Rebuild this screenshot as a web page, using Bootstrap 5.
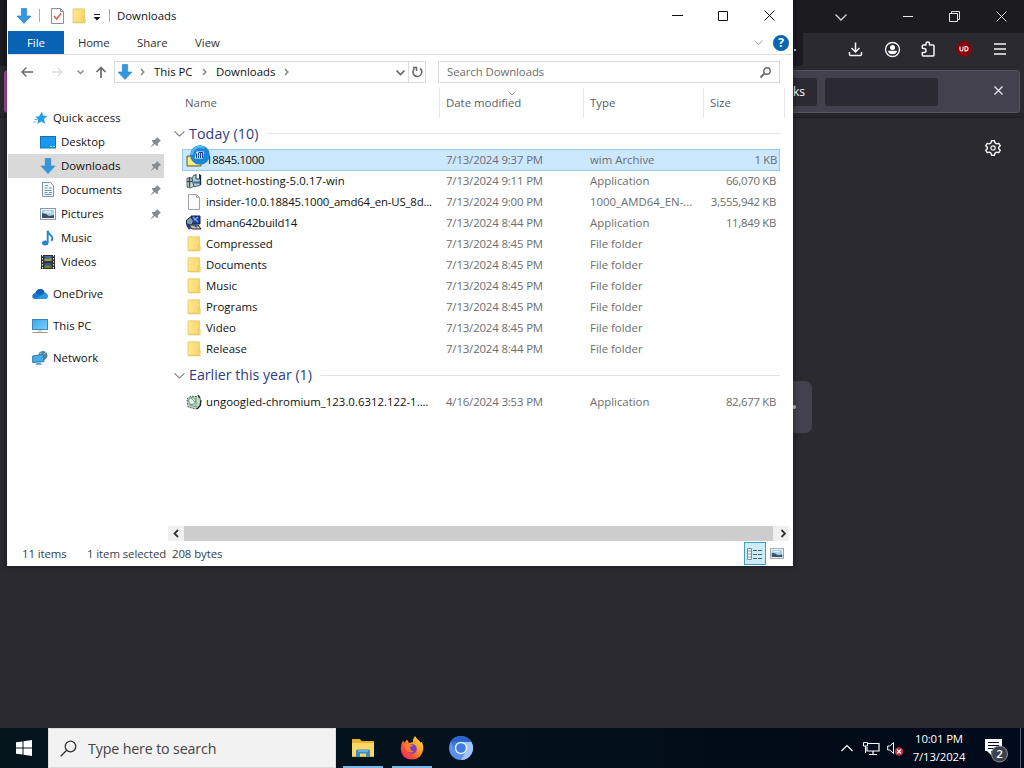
<!DOCTYPE html>
<html lang="en">
<head>
<meta charset="utf-8">
<title>Downloads</title>
<link href="https://cdn.jsdelivr.net/npm/bootstrap@5.3.0/dist/css/bootstrap.min.css" rel="stylesheet">
<script src="https://cdn.jsdelivr.net/npm/bootstrap@5.3.0/dist/js/bootstrap.bundle.min.js"></script>
<style>
body{width:1024px;height:768px;font-family:"Open Sans","Noto Sans",sans-serif;font-size:11.4px;line-height:16px;color:#111;background:#2b2a30}
svg{display:block;flex:none;overflow:visible}
.desk{width:1024px;height:768px}
.ff{height:728px;color:#fbfbfe}
.ff-title{height:33px;background:#1c1b20;padding-right:17px}
.ff-tools{height:36px;background:#2b2a31;padding-right:17px}
.ff-url{width:803px;height:33px;background:#1c1b22;border-radius:0 0 4px 0;padding-right:7px}
.ff-note{height:43px;margin:1px 4px 0 4px;background:#42414d;border:1px solid #55545f;border-radius:4px;padding-right:16px;border-left:4px solid #a14c9b}
.ff-chip{height:28px;background:#2b2a33;border-radius:3px}
.ff-line{height:5px;background:#25242c;border-bottom:1px solid #1e1d25}
.ff-box{width:120px;height:52px;margin-left:692px;margin-top:232px;background:#42414d;border-radius:7px;padding-right:16px}
.win{left:7px;top:0;width:786px;height:566px;background:#fff;padding-left:1px;box-shadow:0 0 7px rgba(0,0,0,.45)}
.w-title{height:31px;padding-left:8px}
.vr-line{width:1px;height:13px;background:#aaa}
.w-tabs{height:24px;border-bottom:1px solid #dfe0e2;color:#333}
.file-tab{width:56px;height:23px;background:#0863b5;color:#fff}
.w-addr{height:33px;padding:1px 13px 0 12px}
.box-in{height:22px;border:1px solid #d9d9d9}
.w-body{height:453px}
.side{width:156px;padding-top:18px}
.side-i{height:24px;padding-left:32px;padding-right:2px}
.side-r{height:24px;padding-left:24px;margin-top:8px}
.side-q{height:24px;padding-left:25px}
.side-on{background:#d9d9d9}
.side-i svg,.side-r svg,.side-q svg{margin-right:5px}
.side-i svg.pin{margin:0}
.pane{margin-left:4px;width:621px}
.heads{height:30px;padding-left:17px;color:#56606e}
.heads>div{flex:none;padding-left:6px;border-left:1px solid #e7e7e7;height:30px;padding-top:7px}
.heads>.h0{width:254px;border:0;padding-left:0}
.grp{height:31px;padding-left:6px;padding-right:9px;font-size:14.2px;color:#2c3b86}
.grp2{height:32px}
.grp i{height:1px;background:#e4e4e8;margin-left:8px}
.it{height:21px;margin-left:14px;width:598px;padding-left:4px;color:#6d6d6d;white-space:nowrap}
.it.on{height:22px;margin-bottom:-1px;background:#cce8ff;border:1px solid #99c9ee;padding-left:3px}
.it.on .c3{padding-right:3px}
.it svg{margin-right:4px}
.it span{flex:none}
.c0{width:240px;color:#111}
.c0.long{letter-spacing:-.17px}
.c0.num{letter-spacing:-.35px}
.c1{width:144px;letter-spacing:-.15px}.c2{width:104px}.c3{width:86px;padding-right:4px;text-align:right;letter-spacing:-.3px}
.hs{height:15px;background:#f0f0f0;padding:0 0 0 4px}
.thumb{width:589px;height:15px;background:#cdcdcd}
.stat{height:25px;padding:0 5px 0 14px;color:#333d4c;letter-spacing:-.08px}
.view-on{width:22px;height:23px;background:#cdecfa;border:1px solid #3f9cc4}
.bar{height:40px;background:linear-gradient(90deg,#04151c,#03121c 45%,#020a17 80%,#010a1b)}
.start{width:48px}
.srch{width:288px;height:40px;background:#f2f2f2;border:1px solid #dadcde;color:#444;font-size:14.25px;letter-spacing:-.15px;padding-left:11px;padding-top:1px}
.app{width:49px;height:40px}
.app b{width:40px;height:2px;background:#76b9ed}
.clock{width:64px;font-size:11.4px;line-height:18px;color:#fff;letter-spacing:-.15px}
</style>
</head>
<body>
<svg width="0" height="0" class="position-absolute">
<defs>
<linearGradient id="fg" x1="0" x2="1"><stop offset="0" stop-color="#ffe68f"/><stop offset="1" stop-color="#f5d86c"/></linearGradient>
<linearGradient id="scr" x1="0" x2="1" y2="1"><stop offset="0" stop-color="#3aa5e8"/><stop offset="1" stop-color="#7ed0fa"/></linearGradient>
<symbol id="dl" viewBox="0 0 16 16"><path d="M5.300.5h5.400V8H15l-7 7.500L1 8h4.300z" fill="#3496dc" stroke="#2480c4" stroke-width=".6"/></symbol>
<symbol id="fold" viewBox="0 0 14 16"><path d="M1 .8h11.500V14.500H1z" fill="url(#fg)" stroke="#e3c461" stroke-width=".7"/><path d="M11.500 8.500l1.700 1.200V15H3l-2-.8h10.500z" fill="#f8dc78" stroke="#dfbd55" stroke-width=".5"/></symbol>
<symbol id="pin" viewBox="0 0 12 12"><path d="M7 1l4 4-1.300.5-1.700 1.800.1 2.200-1 .8-2.300-2.300L1 11l-.3-.3L3.600 7 1.700 5l.8-1 2.200.1L6.500 2.300z" fill="#848b91"/></symbol>
<symbol id="pc" viewBox="0 0 16 16"><rect x=".5" y="1.500" width="15" height="10" fill="url(#scr)" stroke="#3a86b8"/><path d="M6 12h4v2H6z" fill="#d3dadf"/><path d="M.5 14.500h15" stroke="#a9958c"/></symbol>
<symbol id="chev" viewBox="0 0 10 10"><path d="M.5 3L5 7.300 9.500 3" fill="none" stroke="currentColor"/></symbol>
<symbol id="pic" viewBox="0 0 16 12"><rect x=".5" y=".5" width="15" height="11" fill="#f4f8fb" stroke="#8d9aa6"/><rect x="2" y="2" width="12" height="8" fill="#a9cde3"/><path d="M2 5l4 1 3 2 5-1v3H2z" fill="#3b5266"/><path d="M4 4h7" stroke="#fff"/></symbol>
</defs></svg>

<main class="desk position-relative overflow-hidden">
<section class="ff">
  <div class="ff-title d-flex align-items-center justify-content-end">
    <svg width="14" height="14" style="margin-right:54px"><path d="M1.500 4.500L7 10 12.500 4.500" fill="none" stroke="#d6d6dc" stroke-width="1.300"/></svg>
    <svg width="12" height="12" style="margin-right:35px"><path d="M1 5.500h10" stroke="#e8e8ec"/></svg>
    <svg width="11" height="11" style="margin-right:36px"><path d="M.5 2.500h8v8h-8zM2.500 2.500v-2h8v8h-2" fill="none" stroke="#e0e0e5"/></svg>
    <svg width="11" height="11"><path d="M.5.5l10 10M10.500.5l-10 10" stroke="#cfcfd5"/></svg>
  </div>
  <div class="ff-tools d-flex justify-content-between">
    <div class="ff-url d-flex align-items-center justify-content-end"><span class="rounded-circle bg-light" style="width:2px;height:2px"></span></div>
    <div class="d-flex align-items-center" style="height:32px">
      <svg width="14" height="14" style="margin-right:22px"><path d="M7.500 .5v9M3.500 6l4 4 4-4M1.500 10v2.500q0 1 1 1h10q1 0 1-1V10" fill="none" stroke="#f4f4f8" stroke-width="1.500"/></svg>
      <svg width="16" height="16" style="margin-right:20px"><circle cx="8.500" cy="8.500" r="7" fill="none" stroke="#f4f4f8" stroke-width="1.400"/><circle cx="8.500" cy="6.500" r="2.500" fill="#fff"/><path d="M4 9.800h9Q12.500 13.300 8.500 13.300T4 9.800" fill="#fff"/></svg>
      <svg width="16" height="16" style="margin-right:20px"><path d="M2.300 7.300V5q0-1 1-1H6V3q0-2 1.800-2T9.500 3v1H13q1 0 1 1v9q0 1-1 1H3.300q-1 0-1-1v-2.500H4q2 0 2-2T4 7.400z" fill="none" stroke="#f4f4f8" stroke-width="1.500" stroke-linejoin="round"/></svg>
      <svg width="16" height="16" style="margin-right:22px"><path d="M5 .5h6L15.500 5v6L11 15.500H5L.5 11V5z" fill="#8b0009"/><path d="M4 5.500v3q0 1.500 1.500 1.500T7 8.500v-3M9 5.500h1q2 0 2 2.200T10 10H9z" fill="none" stroke="#fff" stroke-width="1.100"/></svg>
      <svg width="13" height="12"><path d="M0 1h12M0 6h12M0 11h12" stroke="#f4f4f8" stroke-width="1.400"/></svg>
    </div>
  </div>
  <div class="ff-note d-flex align-items-center justify-content-end">
    <div class="ff-chip d-flex align-items-center justify-content-end" style="width:90px;padding-right:12px;margin-right:8px;font-size:12px">Bookmarks</div>
    <div class="ff-chip" style="width:113px;margin-right:56px"></div>
    <svg width="9" height="9" style="margin-top:-3px"><path d="M.5.5l8 8M8.500.5l-8 8" stroke="#e8e8ee" stroke-width="1.300"/></svg>
  </div>
  <div class="ff-line"></div>
  <div class="d-flex justify-content-end" style="padding:22px 23px 0 0;height:31px">
    <svg width="16" height="16" viewBox="0 0 16 16"><path d="M6.500.8h3l.5 2.100 1.700 1 2.100-.6 1.500 2.500L13.700 7.300v1.400l1.600 1.500-1.500 2.500-2.100-.6-1.700 1-.5 2.100h-3L6 13.100l-1.700-1-2.100.6-1.500-2.500 1.600-1.500V7.300L.7 5.800l1.500-2.500 2.100.6 1.700-1z" fill="none" stroke="#f4f4f8" stroke-width="1.400" stroke-linejoin="round"/><circle cx="8" cy="8" r="2.200" fill="none" stroke="#f4f4f8" stroke-width="1.200"/></svg>
  </div>
  <div class="ff-box d-flex align-items-center justify-content-end"><span class="rounded-circle" style="width:4px;height:4px;background:#bbb"></span></div>
</section>

<section class="win position-absolute d-flex flex-column">
  <div class="w-title d-flex align-items-center">
    <svg width="16" height="16"><use href="#dl"/></svg>
    <span class="vr-line" style="margin:0 11px 0 7px"></span>
    <svg width="13" height="16"><path d="M.5.5h9l3 3v12H.5z" fill="#fff" stroke="#888da0"/><path d="M9.500.5v3h3" fill="none" stroke="#888da0"/><path d="M3 8l2.500 3L10 5.500" fill="none" stroke="#dc6548" stroke-width="1.700"/></svg>
    <svg width="14" height="16" style="margin-left:8px"><use href="#fold"/></svg>
    <svg width="8" height="7" style="margin:3px 8px 0 7px"><path d="M1 .5h6" stroke="#222"/><path d="M.5 3h7L4 6.500z" fill="#111"/></svg>
    <span class="vr-line" style="margin-right:7px"></span>
    <span>Downloads</span>
    <div class="d-flex align-items-center ms-auto" style="padding-right:18px">
      <svg width="11" height="11" style="margin-right:35px"><path d="M0 5.500h11" stroke="#111"/></svg>
      <svg width="10" height="10" style="margin-right:36px"><path d="M.5.5h9v9h-9z" fill="none" stroke="#111"/></svg>
      <svg width="11" height="11"><path d="M.5.5l10 10M10.500.5l-10 10" stroke="#111"/></svg>
    </div>
  </div>
  <div class="w-tabs d-flex align-items-center">
    <div class="file-tab d-flex align-items-center justify-content-center">File</div>
    <span style="margin-left:14px;width:59px;letter-spacing:-.2px">Home</span><span style="width:58px">Share</span><span>View</span>
    <div class="d-flex align-items-center ms-auto" style="padding-right:4px;color:#999">
      <svg width="9" height="9" style="margin-right:10px"><use href="#chev"/></svg>
      <svg width="16" height="16"><circle cx="8" cy="8" r="7.700" fill="#0966b4" stroke="#074b86" stroke-width=".6"/><text x="8" y="12.400" text-anchor="middle" font-size="12" font-weight="700" fill="#fff">?</text></svg>
    </div>
  </div>
  <div class="w-addr d-flex align-items-center">
    <svg width="14" height="12" style="margin-right:17px"><path d="M13 6H2M6.500 1.500L2 6l4.500 4.500" fill="none" stroke="#666" stroke-width="1.400"/></svg>
    <svg width="13" height="12" style="margin-right:13px"><path d="M1 6h10M6.500 1.500L11 6l-4.500 4.500" fill="none" stroke="#ddd" stroke-width="1.300"/></svg>
    <svg width="7" height="7" style="margin-right:11px"><path d="M.5 1.500l3 3 3-3" fill="none" stroke="#888" stroke-width="1.400"/></svg>
    <svg width="12" height="12" style="margin-right:7px"><path d="M6 12V1.500M1.500 6L6 1.500 10.500 6" fill="none" stroke="#6b6b6b" stroke-width="1.700"/></svg>
    <div class="box-in d-flex align-items-center" style="width:312px;padding-left:2px">
      <svg width="16" height="16"><use href="#dl"/></svg>
      <svg width="5" height="8" style="margin:0 9px 0 7px"><path d="M1 1l3 3-3 3" fill="none" stroke="#777" stroke-width="1.200"/></svg>
      <span style="width:41px">This PC</span>
      <svg width="5" height="8" style="margin:0 9px 0 7px"><path d="M1 1l3 3-3 3" fill="none" stroke="#777" stroke-width="1.200"/></svg>
      <span style="width:60px">Downloads</span>
      <svg width="5" height="8" style="margin-left:8px"><path d="M1 1l3 3-3 3" fill="none" stroke="#777" stroke-width="1.200"/></svg>
      <svg width="9" height="9" class="ms-auto" style="margin-right:3px"><path d="M.5 2.500l4 4 4-4" fill="none" stroke="#666" stroke-width="1.700"/></svg>
      <div class="d-flex align-items-center justify-content-center h-100" style="width:17px;border-left:1px solid #ddd"><svg width="12" height="12"><path d="M3.500 2.500A4.500 4.500 0 1 0 9 2.300M2 1.500H5.500V5" fill="none" stroke="#666" stroke-width="1.500"/></svg></div>
    </div>
    <div class="box-in d-flex align-items-center justify-content-between" style="width:342px;margin-left:12px;padding:0 8px;color:#6d6d6d;letter-spacing:-.08px">Search Downloads
      <svg width="11" height="11"><circle cx="7" cy="4" r="3.200" fill="none" stroke="#666" stroke-width="1.400"/><path d="M4.600 6.400L.5 10.500" stroke="#666" stroke-width="1.900"/></svg>
    </div>
  </div>

  <div class="w-body d-flex">
    <nav class="side">
      <div class="side-q d-flex align-items-center"><svg width="15" height="14" viewBox="0 0 15 14"><path d="M9 .5l1 4 4.500.4-3.500 3 1.200 4.800-4-2.300-3.800 2.500.8-4.200-2.700-3L6 5.300z" fill="#279de8"/><path d="M1.500 8.500h3M.5 11h3" stroke="#5db6ec"/></svg>Quick access</div>
      <div class="side-i d-flex align-items-center"><svg width="16" height="13"><rect x=".5" y=".5" width="15" height="11.500" fill="#1b98ee" stroke="#1673b8"/><path d="M10 10.500h5" stroke="#a6d8f8" stroke-dasharray="2 1"/></svg>Desktop<svg class="pin ms-auto" width="12" height="12"><use href="#pin"/></svg></div>
      <div class="side-i side-on d-flex align-items-center"><svg width="16" height="16"><use href="#dl"/></svg>Downloads<svg class="pin ms-auto" width="12" height="12"><use href="#pin"/></svg></div>
      <div class="side-i d-flex align-items-center"><svg width="16" height="16"><path d="M2.500.5h8l3 3v11h-11z" fill="#f5f9fc" stroke="#8293a2"/><path d="M5 3.500h3M4.500 6h3m1.500 0h3M4.500 8.500h7M4.500 10.500h3m1.500 0h3M4.500 12.500h7" stroke="#5b97c2"/></svg>Documents<svg class="pin ms-auto" width="12" height="12"><use href="#pin"/></svg></div>
      <div class="side-i d-flex align-items-center"><svg width="16" height="12"><use href="#pic"/></svg>Pictures<svg class="pin ms-auto" width="12" height="12"><use href="#pin"/></svg></div>
      <div class="side-i d-flex align-items-center"><svg width="16" height="16"><ellipse cx="5.200" cy="13" rx="3.200" ry="2.500" fill="#2488cb"/><path d="M7.700 13V.7q.5 2.500 2.800 4.200 3 2.800 1 6" fill="none" stroke="#2488cb" stroke-width="1.900"/></svg>Music</div>
      <div class="side-i d-flex align-items-center"><svg width="16" height="16"><rect x="1" y="1" width="14" height="14" fill="#333"/><path d="M2.500 1v14M13.500 1v14" stroke="#ddd" stroke-dasharray="1.500 1.500"/><path d="M4.500 2h7v5h-7z" fill="#496b9c"/><path d="M4.500 5l4 0 3-1v3h-7z" fill="#9aa241"/><path d="M4.500 9h7v5h-7z" fill="#35538a"/><path d="M4.500 12l3-1 4 1v2h-7z" fill="#717d3a"/></svg>Videos</div>
      <div class="side-r d-flex align-items-center"><svg width="16" height="12"><path d="M4 11Q.3 11 .3 8.200T3.500 5Q5 .8 8.500 1q3 .2 4 3.500Q15.700 5 15.700 8T13 11z" fill="#1579ce"/><path d="M4 11L12.500 5q3.200.7 3.200 3.200T13 11z" fill="#2a98e2"/><path d="M3.500 5Q5 .8 8.500 1q3 .2 4 3.500L9 7z" fill="#0c62b4"/></svg>OneDrive</div>
      <div class="side-r d-flex align-items-center"><svg width="16" height="16"><use href="#pc"/></svg>This PC</div>
      <div class="side-r d-flex align-items-center"><svg width="16" height="16"><circle cx="11" cy="5.500" r="4.500" fill="#5b8398"/><path d="M8 3l3 2 3-3M11 5v5" stroke="#a9ccd8" fill="none"/><path d="M.7 6l10.500-1.500.8 7-11.300 1z" fill="#45aee8" stroke="#2878ac"/><path d="M5 13l4-.5v1.500l2 .8H3z" fill="#5a9fc4"/></svg>Network</div>
    </nav>

    <div class="pane d-flex flex-column">
      <div class="heads d-flex">
        <div class="h0">Name</div>
        <div class="position-relative" style="width:144px">Date modified<svg width="8" height="5" class="position-absolute" style="left:68px;top:3px"><path d="M.5.5L4 4 7.500.5" fill="none" stroke="#999"/></svg></div>
        <div style="width:120px">Type</div>
        <div style="width:81px">Size</div><div></div>
      </div>
      <div class="grp d-flex align-items-center"><svg width="11" height="11" style="margin-right:4px;color:#777"><use href="#chev"/></svg><span style="letter-spacing:.12px">Today (10)</span><i class="flex-fill"></i></div>

      <div class="it on d-flex align-items-center position-relative"><svg width="16" height="16"><path d="M1 4h6l1 2h7v8H1z" fill="#f7e46b" stroke="#555b35"/><path d="M3 6v5h8" stroke="#fff6ac" fill="none"/></svg><span class="c0 num">18845.1000</span><span class="c1">7/13/2024 9:37 PM</span><span class="c2">wim Archive</span><span class="c3">1 KB</span>
        <svg class="position-absolute m-0" width="20" height="20" style="left:7px;top:-5px"><circle cx="10" cy="10" r="9.800" fill="#1b85d8"/><path d="M2 10A8 8 0 0 1 14 3" fill="none" stroke="#52b4f3" stroke-width="2.500"/><path d="M4.500 13.500l2-7h7.500l-1 7z" fill="#eef7ff"/><path d="M6.500 13V8.500M8.500 7.500h4.500M8.500 13V8M10.500 13V8M12.500 13V7" stroke="#153fa3" stroke-width="1.100"/></svg>
      </div>
      <div class="it d-flex align-items-center"><svg width="16" height="16"><path d="M1 5h5l2 8-3 2-4-1z" fill="#cfd6d2" stroke="#38484b" stroke-width=".8"/><path d="M6 5l2-3h6.500V12L8 14z" fill="#b4cbd8" stroke="#263b4d" stroke-width=".8"/><path d="M10 1v5h3.500V1" fill="#f5fafc" stroke="#23435f"/><path d="M3.500 4v10M1 8.500h5" fill="none" stroke="#3a4d55" stroke-width="1.400"/><path d="M8 9.500h6" stroke="#2f6fa2" stroke-width="2"/><path d="M14.500 2v10" stroke="#17283a" stroke-width="1.400"/></svg><span class="c0" style="letter-spacing:.1px">dotnet-hosting-5.0.17-win</span><span class="c1">7/13/2024 9:11 PM</span><span class="c2">Application</span><span class="c3">66,070 KB</span></div>
      <div class="it d-flex align-items-center"><svg width="16" height="16"><path d="M2.500.5h8l3 3v12h-11z" fill="#fdfdfd" stroke="#a3a3a3"/><path d="M10.500.5v3h3" fill="none" stroke="#a3a3a3"/></svg><span class="c0 long">insider-10.0.18845.1000_amd64_en-US_8d...</span><span class="c1">7/13/2024 9:00 PM</span><span class="c2">1000_AMD64_EN-...</span><span class="c3">3,555,942 KB</span></div>
      <div class="it d-flex align-items-center"><svg width="16" height="16"><path d="M5 1h9v8H5z" fill="#1b43ad" stroke="#222"/><path d="M7 2l5 5M7 6l5-4" stroke="#75aaf0" stroke-width="1.300"/><path d="M.5 5l4-3 3 4-2 5-5-2z" fill="#7f9fa8" stroke="#222f51"/><path d="M3 10h9l3 4H6z" fill="#c7bea8" stroke="#222"/><path d="M1 9l3 5" stroke="#213b87" stroke-width="2.500"/><path d="M7 9l4 3" stroke="#2b5b9a" stroke-width="2"/></svg><span class="c0" style="letter-spacing:-.12px">idman642build14</span><span class="c1">7/13/2024 8:44 PM</span><span class="c2">Application</span><span class="c3">11,849 KB</span></div>
      <div class="it d-flex align-items-center"><svg width="16" height="16"><use href="#fold"/></svg><span class="c0">Compressed</span><span class="c1">7/13/2024 8:45 PM</span><span class="c2">File folder</span></div>
      <div class="it d-flex align-items-center"><svg width="16" height="16"><use href="#fold"/></svg><span class="c0">Documents</span><span class="c1">7/13/2024 8:45 PM</span><span class="c2">File folder</span></div>
      <div class="it d-flex align-items-center"><svg width="16" height="16"><use href="#fold"/></svg><span class="c0">Music</span><span class="c1">7/13/2024 8:45 PM</span><span class="c2">File folder</span></div>
      <div class="it d-flex align-items-center"><svg width="16" height="16"><use href="#fold"/></svg><span class="c0">Programs</span><span class="c1">7/13/2024 8:45 PM</span><span class="c2">File folder</span></div>
      <div class="it d-flex align-items-center"><svg width="16" height="16"><use href="#fold"/></svg><span class="c0">Video</span><span class="c1">7/13/2024 8:45 PM</span><span class="c2">File folder</span></div>
      <div class="it d-flex align-items-center"><svg width="16" height="16"><use href="#fold"/></svg><span class="c0">Release</span><span class="c1">7/13/2024 8:44 PM</span><span class="c2">File folder</span></div>

      <div class="grp grp2 d-flex align-items-center"><svg width="11" height="11" style="margin-right:4px;color:#777"><use href="#chev"/></svg><span>Earlier this year (1)</span><i class="flex-fill"></i></div>
      <div class="it d-flex align-items-center"><svg width="16" height="16"><path d="M1 5l4-3 9 1 1 8-5 4-8-2z" fill="#c5d5c8" stroke="#50685a" stroke-dasharray="2 1"/><circle cx="6" cy="7" r="3.500" fill="#e8f1e8" stroke="#689b77"/><path d="M5 4l5 5M10 3v9M3 11l8 2" stroke="#6fa583"/><path d="M12 1l2 3M15 6l-1 6-3 3" fill="none" stroke="#1c2921" stroke-width="1.300"/></svg><span class="c0">ungoogled-chromium_123.0.6312.122-1....</span><span class="c1">4/16/2024 3:53 PM</span><span class="c2">Application</span><span class="c3">82,677 KB</span></div>

      <div class="hs mt-auto d-flex align-items-center justify-content-between">
        <svg width="8" height="9"><path d="M6 1L2.500 4.500 6 8" fill="none" stroke="#333" stroke-width="1.800"/></svg>
        <div class="thumb ms-1 me-auto"></div>
        <svg width="12" height="9"><path d="M4.500 1L8 4.500 4.500 8" fill="none" stroke="#333" stroke-width="1.800"/></svg>
      </div>
    </div>
  </div>
  <div class="stat d-flex align-items-center">
    <span style="width:65px">11 items</span><span style="width:85px" class="text-nowrap">1 item selected</span><span>208 bytes</span>
    <div class="view-on d-flex align-items-center justify-content-center ms-auto"><svg width="16" height="14"><path d="M.5 1.500h4v11h-4zM.5 4h4M.5 7h4M.5 10h4" fill="#fff" stroke="#5d7887" stroke-width=".8"/><path d="M6 3.500h10M6 7.500h10M6 11.500h10" stroke="#4b626e" stroke-dasharray="4 1"/></svg></div>
    <svg width="14" height="11" style="margin:0 4px 1px 4px"><use href="#pic"/></svg>
  </div>
</section>

<footer class="bar d-flex align-items-center text-white">
  <div class="start d-flex justify-content-center"><svg width="16" height="16"><path d="M0 2.300L6.500 1.400V7.500H0zM7.500 1.200L16 0v7.500H7.500zM0 8.500h6.500v6.100L0 13.700zM7.500 8.500H16V16l-8.500-1.200z" fill="#fff"/></svg></div>
  <div class="srch d-flex align-items-center"><svg width="17" height="17" style="margin-right:11px"><circle cx="10.500" cy="6.500" r="5.300" fill="none" stroke="#333" stroke-width="1.300"/><path d="M6.700 10.300L.7 16.300" stroke="#333" stroke-width="1.300"/></svg>Type here to search</div>
  <div class="app d-flex flex-column align-items-center justify-content-end" style="margin-left:2px">
    <svg width="22" height="19" style="margin-bottom:9px"><path d="M0 1h8l1.500 2H22v16H0z" fill="#e9b32c"/><path d="M0 5h22v13H0z" fill="#fbd866"/><path d="M4 19v-6q0-1.500 1.500-1.500h11q1.500 0 1.500 1.500v6h-4v-3.500H8V19z" fill="#3b8cc6"/><path d="M6 13h10" stroke="#75bde8" stroke-width="1.500"/></svg><b></b></div>
  <div class="app d-flex flex-column align-items-center justify-content-end">
    <svg width="24" height="24" style="margin-bottom:6px" viewBox="0 0 24 24"><defs><linearGradient id="fx" x1="1" x2="0" y2="1"><stop offset="0" stop-color="#fff14d"/><stop offset=".4" stop-color="#ff9a28"/><stop offset=".7" stop-color="#ff4a38"/><stop offset="1" stop-color="#e0208a"/></linearGradient></defs><path d="M15 0q1 2 4 4.500 1 1 1.400 2L22 6q1.500 3.500 1.300 7Q22 23 12 23.500 1 23 .7 12.500.8 8 3 4.500l1.400 2.300L7 3.500 9 7l4-1q-.6-3 2-6z" fill="url(#fx)"/><circle cx="12" cy="13" r="4.800" fill="#7741c5"/><path d="M4 8q4-2 6 .5l3 .8q-1 1.700-3 1.700.1 4 4 4.500-5 2.500-8-1.500-2-2.500-2-6z" fill="#ff7832"/></svg><b></b></div>
  <div class="app d-flex align-items-center justify-content-center"><svg width="24" height="24"><circle cx="12" cy="12" r="12" fill="#5b91e8"/><path d="M12 12V0A12 12 0 0 0 1.600 6L6.800 15z" fill="#3f77d8"/><path d="M1.600 6A12 12 0 0 1 22.400 6H12z" fill="#2866ca"/><path d="M22.400 6A12 12 0 0 1 12 24l5.200-9L12 6z" fill="#a2c4fa"/><circle cx="12" cy="12" r="6.200" fill="#e5effd"/><circle cx="12" cy="12" r="4.800" fill="#3e7ddf"/></svg></div>
  <div class="d-flex align-items-center ms-auto h-100">
    <svg width="12" height="8" style="margin-right:10px"><path d="M.5 7L6 1.500 11.500 7" fill="none" stroke="#fff" stroke-width="1.200"/></svg>
    <svg width="17" height="14" style="margin-right:7px"><path d="M5 2.500h11v7.500H4V6M10 10v3M6 13.500h8" fill="none" stroke="#fff" stroke-width="1.200"/><path d="M.5 1.500h4v3.500h-4zM2.500 5v7" fill="none" stroke="#fff"/></svg>
    <svg width="15" height="15" style="margin-right:5px"><path d="M.7 5h2L6.500 1.500v11L2.700 9h-2z" fill="none" stroke="#fff"/><circle cx="12" cy="10.500" r="4.300" fill="#c52c3b"/><path d="M10 8.500l4 4M14 8.500l-4 4" stroke="#fff" stroke-width="1.200"/></svg>
    <div class="clock text-center"><div class="text-nowrap">10:01 PM</div><div>7/13/2024</div></div>
    <svg width="26" height="26" style="margin:4px 11px 0 12px"><path d="M2 2h17v12H8v4l-4-4H2z" fill="#fff"/><path d="M5 5.500h11M5 8.500h11M5 11.500h7" stroke="#07101f" stroke-width="1.200"/><circle cx="16.500" cy="17" r="8" fill="#3b414a" stroke="#8b9199"/><text x="16.500" y="21.200" text-anchor="middle" font-size="11.500" font-weight="600" fill="#fff">2</text></svg>
    <div class="h-100" style="width:4px;border-left:1px solid #566171"></div>
  </div>
</footer>
</main>
</body>
</html>
